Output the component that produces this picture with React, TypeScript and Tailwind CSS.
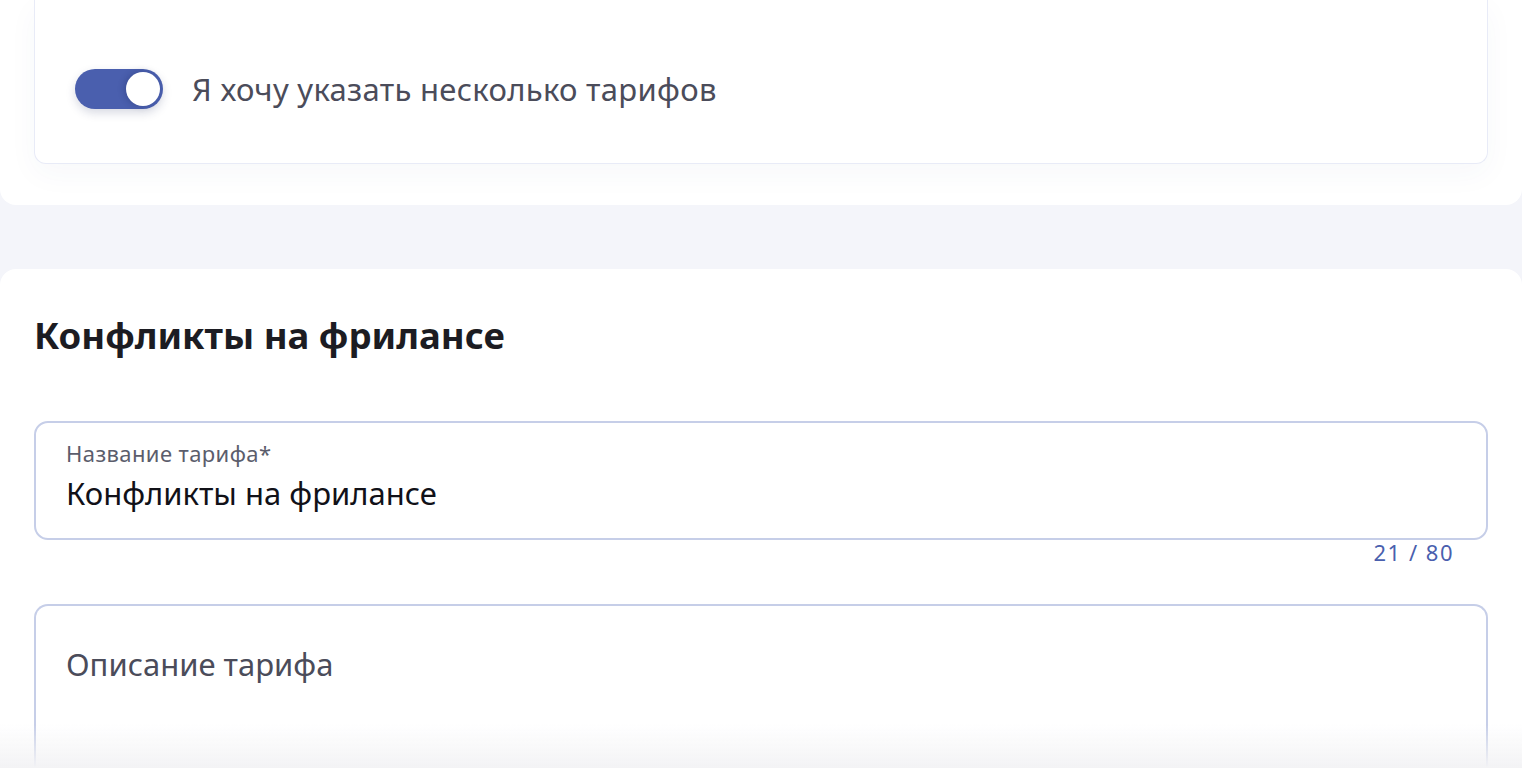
import { useState } from 'react';

function Toggle({ on, onChange }: { on: boolean; onChange: () => void }) {
  return (
    <button
      type="button"
      onClick={onChange}
      className={`relative w-[88px] h-[40px] rounded-full shrink-0 shadow-[0_4px_10px_rgba(40,50,100,0.18)] ${
        on ? 'bg-[#4a5fae]' : 'bg-[#d5d9e6]'
      }`}
    >
      <span
        className={`absolute top-[3px] w-[34px] h-[34px] rounded-full bg-white shadow-[-2px_0_6px_rgba(20,30,80,0.25)] ${
          on ? 'right-[3px]' : 'left-[3px]'
        }`}
      />
    </button>
  );
}

export default function App() {
  const [multi, setMulti] = useState(true);
  const [name, setName] = useState('Конфликты на фрилансе');

  return (
    <div className="min-h-screen bg-[#f4f5fa] font-['Noto_Sans',sans-serif] overflow-hidden relative">
      {/* tariff options panel */}
      <div className="bg-white rounded-b-[16px] px-[34px] pb-[41px]">
        <div className="border border-t-0 border-[#e8ebf7] rounded-b-[12px] bg-white shadow-[0_10px_30px_rgba(60,70,120,0.04)] pt-[69px] pb-[54px] px-[40px]">
          <div className="flex items-center gap-[29px]">
            <Toggle on={multi} onChange={() => setMulti(!multi)} />
            <span className="text-[31px] leading-[40px] tracking-[0.3px] text-[#4b4c5a]">Я хочу указать несколько тарифов</span>
          </div>
        </div>
      </div>

      {/* tariff card */}
      <div className="mt-[64px] bg-white rounded-t-[16px] px-[34px] pt-[42px]">
        <h2 className="text-[36.5px] leading-[48px] font-bold text-[#1c1c22]">Конфликты на фрилансе</h2>

        <div className="mt-[62px]">
          <label className="block border-2 border-[#c6cee8] rounded-[14px] h-[119px] px-[30px] pt-[16px]">
            <div className="text-[22px] leading-[28px] tracking-[0.4px] text-[#5b5d6c]">Название тарифа*</div>
            <input
              value={name}
              maxLength={80}
              onChange={(e) => setName(e.target.value)}
              className="block w-full mt-[6px] text-[31px] leading-[40px] text-[#111118] outline-none bg-transparent"
            />
          </label>
          <div className="text-right pr-[34px] -mt-[1px] text-[22px] leading-[26px] text-[#4a5fae] tracking-[1.5px]">
            {name.length} / 80
          </div>
        </div>

        <div className="mt-[39px] border-2 border-b-0 border-[#c6cee8] rounded-t-[14px] h-[200px] px-[30px] pt-[38px]">
          <textarea
            placeholder="Описание тарифа"
            className="w-full h-full resize-none text-[31px] leading-[40px] text-[#222] placeholder:text-[#4b4c5a] outline-none bg-transparent"
          />
        </div>
      </div>

      <div className="pointer-events-none fixed left-0 right-0 bottom-0 h-[44px] bg-gradient-to-b from-transparent to-[#f3f3f5]" />
    </div>
  );
}
